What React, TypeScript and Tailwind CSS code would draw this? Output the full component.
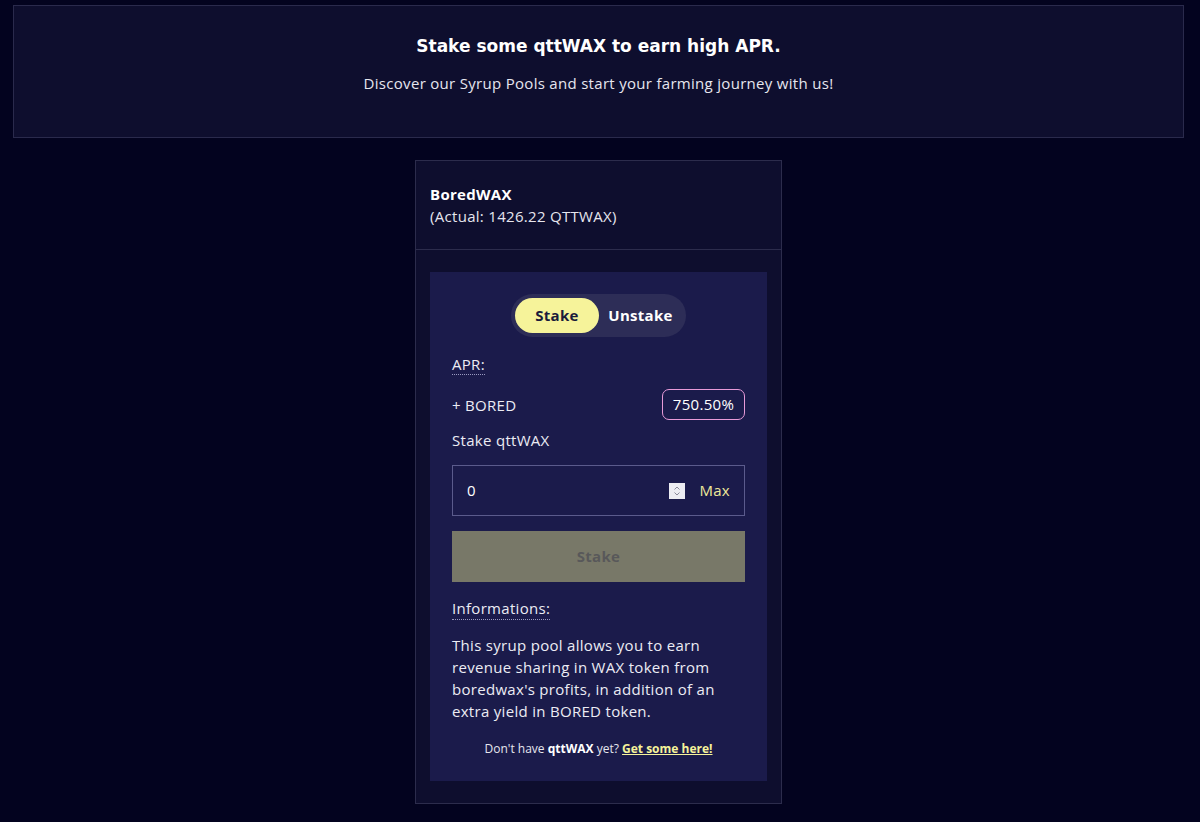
import { useState } from 'react';

const BOLD = { fontFamily: '"DejaVu Sans", "Open Sans", sans-serif' };

export default function App() {
  const [mode, setMode] = useState<'stake' | 'unstake'>('stake');
  const [amount, setAmount] = useState('0');

  return (
    <div
      className="min-h-screen w-full bg-[#03031f] text-[#ececf4] pt-[5px] pb-[18px] tracking-[0.3px]"
      style={{ fontFamily: '"Open Sans", "DejaVu Sans", sans-serif' }}
    >
      <div className="ml-[13px] mr-[16px]">
        {/* Intro banner */}
        <div className="h-[133px] border border-[#2a2a4c] bg-[#0e0e2e] flex flex-col items-center pt-[29px]">
          <h1 className="text-[17px] font-bold leading-[22px] tracking-normal text-white" style={BOLD}>
            Stake some qttWAX to earn high APR.
          </h1>
          <p className="mt-[15px] text-[15px] leading-[22px] text-[#e6e6ee]">
            Discover our Syrup Pools and start your farming journey with us!
          </p>
        </div>

        {/* Pool card */}
        <div className="mx-auto mt-[22px] w-[367px] border border-[#2c2c4c] bg-[#0e0e2e]">
          <div className="h-[89px] border-b border-[#2c2c4c] px-[14px] pt-[22px]">
            <p className="text-[15px] font-bold leading-[22px] text-white">BoredWAX</p>
            <p className="text-[15px] leading-[22px] text-[#e6e6ee]">(Actual: 1426.22 QTTWAX)</p>
          </div>

          <div className="px-[14px] py-[22px]">
            <div className="bg-[#1b1b4b] px-[22px] pt-[22px] pb-[23px]">
              {/* Stake / Unstake toggle */}
              <div className="flex justify-center">
                <div className="flex h-[43px] w-[175px] items-center rounded-full bg-[#2d2d57] p-[4px]">
                  <button
                    onClick={() => setMode('stake')}
                    className={
                      mode === 'stake'
                        ? 'h-[35px] w-[84px] rounded-full bg-[#f6f39a] text-[15px] font-bold text-[#1b1b3b]'
                        : 'h-[35px] w-[84px] rounded-full text-[15px] font-bold text-white'
                    }
                  >
                    Stake
                  </button>
                  <button
                    onClick={() => setMode('unstake')}
                    className={
                      mode === 'unstake'
                        ? 'h-[35px] flex-1 rounded-full bg-[#f6f39a] text-[15px] font-bold text-[#1b1b3b]'
                        : 'h-[35px] flex-1 rounded-full text-[15px] font-bold text-white'
                    }
                  >
                    Unstake
                  </button>
                </div>
              </div>

              {/* APR */}
              <div className="mt-[15px]">
                <span className="inline-block border-b border-dotted border-[#9a9ac0] text-[15px] leading-[20px]">APR:</span>
              </div>
              <div className="mt-[13px] flex items-center justify-between">
                <span className="text-[15px] leading-[22px]">+ BORED</span>
                <span className="flex h-[31px] w-[83px] items-center justify-center rounded-[7px] border border-[#e79ad8] text-[15px] text-white">
                  750.50%
                </span>
              </div>

              <p className="mt-[9px] text-[15px] leading-[22px]">Stake qttWAX</p>

              {/* Amount input */}
              <div className="mt-[14px] flex h-[51px] items-center border border-[#5b5b8c] pl-[14px] pr-[14px]">
                <input
                  value={amount}
                  onChange={e => setAmount(e.target.value)}
                  className="min-w-0 flex-1 bg-transparent text-[15px] text-white outline-none"
                />
                <span className="flex h-[16px] w-[16px] items-center justify-center bg-[#ececf2]">
                  <svg width="8" height="12" viewBox="0 0 8 12" fill="none" stroke="#8a8a9a" strokeWidth="1">
                    <path d="M1.5 4.5 4 2l2.5 2.5" />
                    <path d="M1.5 7.5 4 10l2.5-2.5" />
                  </svg>
                </span>
                <button className="ml-[14px] text-[15px] text-[#eee89a]">Max</button>
              </div>

              <button className="mt-[15px] h-[51px] w-full bg-[#787868] text-[15px] font-bold text-[#58585a]">
                Stake
              </button>

              {/* Informations */}
              <div className="mt-[14px]">
                <span className="inline-block border-b border-dotted border-[#9a9ac0] text-[15px] leading-[21px]">Informations:</span>
              </div>
              <p className="mt-[14px] text-[15px] leading-[22px] text-[#ececf4]">
                This syrup pool allows you to earn revenue sharing in WAX token from boredwax's profits, in addition of an extra yield in BORED token.
              </p>

              <p className="mt-[18px] text-center text-[12px] leading-[18px] tracking-normal text-[#e6e6ee]">
                Don't have <span className="font-bold text-white">qttWAX</span> yet?{' '}
                <a href="#" className="font-bold text-[#f6f39a] underline">Get some here!</a>
              </p>
            </div>
          </div>
        </div>
      </div>
    </div>
  );
}
